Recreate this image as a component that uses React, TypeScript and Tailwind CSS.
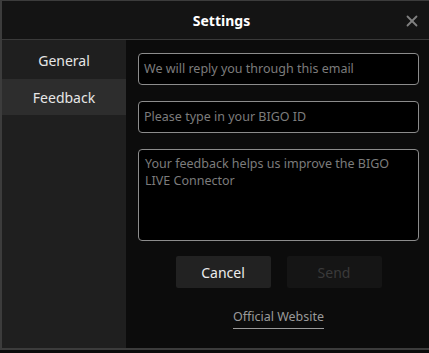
import { X } from 'lucide-react';

const font = { fontFamily: '"Noto Sans", "Open Sans", sans-serif' };

function Field({ placeholder }: { placeholder: string }) {
  return (
    <div className="flex h-[32px] items-center rounded-[4px] border border-[#8c8c8c] bg-black px-[5px] text-[12.5px] text-[#7c7c7c]">
      {placeholder}
    </div>
  );
}

export default function App() {
  return (
    <div className="h-[353px] w-[429px] bg-[#0a0a0a]" style={font}>
      <div className="flex h-[350px] flex-col border-l-2 border-t border-b-2 border-[#3c3c3c] bg-[#141414]">
        <div className="relative flex h-[39px] shrink-0 items-center justify-center border-b border-[#3a3a3a] pl-[12px]">
          <span className="text-[14px] font-bold text-white">Settings</span>
          <X className="absolute right-[8px] top-[11px] h-[18px] w-[18px] text-[#808080]" strokeWidth={2.4} />
        </div>
        <div className="flex min-h-0 flex-1">
          <div className="flex w-[124px] shrink-0 flex-col bg-[#1f1f1f] pt-[2px] text-[14px] text-[#e6e6e6]">
            <div className="flex h-[37px] items-center justify-center">General</div>
            <div className="flex h-[36px] items-center justify-center bg-[#2d2d2d]">Feedback</div>
          </div>
          <div className="flex flex-1 flex-col bg-[#0c0c0c] pl-[12px] pr-[10px] pt-[13px]">
            <div className="flex flex-col gap-[16px]">
              <Field placeholder="We will reply you through this email" />
              <Field placeholder="Please type in your BIGO ID" />
              <div className="h-[92px] rounded-[4px] border border-[#8c8c8c] bg-black px-[6px] pt-[5px] text-[12.5px] leading-[17px] text-[#7c7c7c]">
                Your feedback helps us improve the BIGO LIVE Connector
              </div>
            </div>
            <div className="mt-[15px] flex justify-center gap-[16px]">
              <div className="flex h-[32px] w-[95px] items-center justify-center rounded-[2px] bg-[#222222] text-[14px] text-[#ececec]">
                Cancel
              </div>
              <div className="flex h-[32px] w-[95px] items-center justify-center rounded-[2px] bg-[#151515] text-[14px] text-[#3a3a3a]">
                Send
              </div>
            </div>
            <div className="mt-[20px] flex justify-center">
              <span className="border-b border-[#9a9a9a] pb-[1px] text-[12.5px] text-[#9a9a9a]">Official Website</span>
            </div>
          </div>
        </div>
      </div>
    </div>
  );
}
